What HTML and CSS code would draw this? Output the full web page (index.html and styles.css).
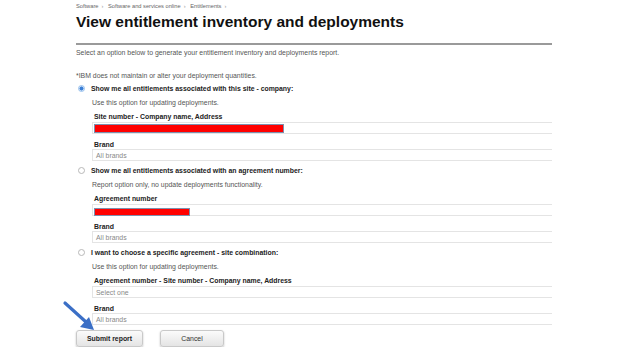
FILE: index.html
```html
<!DOCTYPE html>
<html lang="en">
<head>
    <meta charset="UTF-8">
    <title>View entitlement inventory and deployments</title>
    <link rel="stylesheet" href="styles.css">
</head>
<body>
    <main class="page">
        <div class="crumbs">
            <span>Software</span><span class="sep">&rsaquo;</span>
            <span>Software and services online</span><span class="sep">&rsaquo;</span>
            <span>Entitlements</span><span class="sep">&rsaquo;</span>
        </div>
        <h1>View entitlement inventory and deployments</h1>
        <div class="rule"></div>
        <p class="intro">Select an option below to generate your entitlement inventory and deployments report.</p>
        <p class="note">*IBM does not maintain or alter your deployment quantities.</p>

        <!-- option 1 -->
        <div class="option">
            <div class="option-head"><span class="radio checked"></span>Show me all entitlements associated with this site - company:</div>
            <p class="hint">Use this option for updating deployments.</p>
            <div class="field">
                <div class="field-label">Site number - Company name, Address</div>
                <div class="field-box"><span class="redact" style="width: 188px"></span></div>
            </div>
            <div class="field">
                <div class="field-label">Brand</div>
                <div class="field-box">All brands</div>
            </div>
        </div>

        <!-- option 2 -->
        <div class="option">
            <div class="option-head"><span class="radio"></span>Show me all entitlements associated with an agreement number:</div>
            <p class="hint">Report option only, no update deployments functionality.</p>
            <div class="field">
                <div class="field-label">Agreement number</div>
                <div class="field-box"><span class="redact low" style="width: 94px"></span></div>
            </div>
            <div class="field">
                <div class="field-label">Brand</div>
                <div class="field-box">All brands</div>
            </div>
        </div>

        <!-- option 3 -->
        <div class="option">
            <div class="option-head"><span class="radio"></span>I want to choose a specific agreement - site combination:</div>
            <p class="hint">Use this option for updating deployments.</p>
            <div class="field">
                <div class="field-label">Agreement number - Site number - Company name, Address</div>
                <div class="field-box">Select one</div>
            </div>
            <div class="field">
                <div class="field-label">Brand</div>
                <div class="field-box">All brands</div>
            </div>
        </div>

        <div class="actions">
            <button class="btn primary">Submit report</button>
            <button class="btn">Cancel</button>
        </div>
    </main>

    <!-- annotation arrow -->
    <svg class="arrow" width="40" height="36" viewBox="0 0 40 36">
        <line x1="3" y1="3" x2="24" y2="22" stroke="#3b6fc6" stroke-width="3.2" stroke-linecap="round"/>
        <polygon points="32,30 18,27 27,17" fill="#3b6fc6"/>
    </svg>
</body>
</html>
```

FILE: styles.css
```css
body {
    font-family: "Liberation Sans", Arial, sans-serif;
    margin: 0;
    padding: 0;
    background: #fff;
    color: #222;
}

.page {
    width: 476px;
    margin-left: 76px;
    padding-top: 3px;
}

.crumbs {
    font-size: 5.7px;
    line-height: 7px;
    color: #666;
    height: 9px;
}

.crumbs .sep {
    margin: 0 3px;
    color: #999;
}

h1 {
    font-size: 15.5px;
    font-weight: bold;
    margin: 0;
    color: #111;
    line-height: 20px;
}

.rule {
    height: 2px;
    background: #9a9a9a;
    margin-top: 11px;
}

.intro,
.note {
    font-size: 6.9px;
    line-height: 9px;
    color: #555;
    margin: 0;
}

.intro {
    margin-top: 3px;
}

.note {
    margin-top: 14px;
}

.option {
    margin-top: 4px;
}

.note + .option {
    margin-top: 3px;
}

.option-head {
    display: flex;
    align-items: center;
    font-size: 6.9px;
    font-weight: bold;
    color: #222;
    height: 10px;
}

.radio {
    width: 5px;
    height: 5px;
    border: 1px solid #b8b8b8;
    border-radius: 50%;
    margin: 0 6px 0 2px;
    background: #fff;
}

.radio.checked {
    border-color: #9cc3ee;
    background: radial-gradient(circle, #3b7fd6 0 1.8px, #cfe2f7 2.2px);
}

.hint {
    font-size: 6.9px;
    line-height: 9px;
    color: #555;
    margin: 5px 0 0 16px;
}

.field {
    margin: 6px 0 0 16px;
}

.field + .field {
    margin-top: 7px;
}

.field-label {
    font-size: 6.9px;
    line-height: 8px;
    font-weight: bold;
    color: #222;
    padding-left: 2px;
    height: 9px;
}

.field + .field .field-label {
    height: 8px;
}

.field-box {
    height: 10px;
    border: 1px solid #e4e4e4;
    border-right: none;
    font-size: 6.9px;
    color: #888;
    padding-left: 3px;
    display: flex;
    align-items: center;
}

.redact {
    display: block;
    height: 7px;
    background: #ff0000;
    margin-left: -1px;
    outline: 1px solid #7d8fae;
}

.redact.low {
    margin-top: 4px;
    height: 6px;
}

.actions {
    display: flex;
    gap: 17px;
    margin-top: 5px;
}

.btn {
    font-family: "Liberation Sans", Arial, sans-serif;
    font-size: 6.9px;
    color: #333;
    width: 64px;
    height: 17px;
    border: 1px solid #c9c9c9;
    border-radius: 3px;
    background: linear-gradient(#fbfbfb, #e4e4e4);
    box-shadow: 0 1px 2px rgba(0, 0, 0, 0.25);
    padding: 0;
}

.btn.primary {
    font-weight: bold;
    color: #222;
    width: 67px;
}

.arrow {
    position: absolute;
    left: 62px;
    top: 300px;
}
```
